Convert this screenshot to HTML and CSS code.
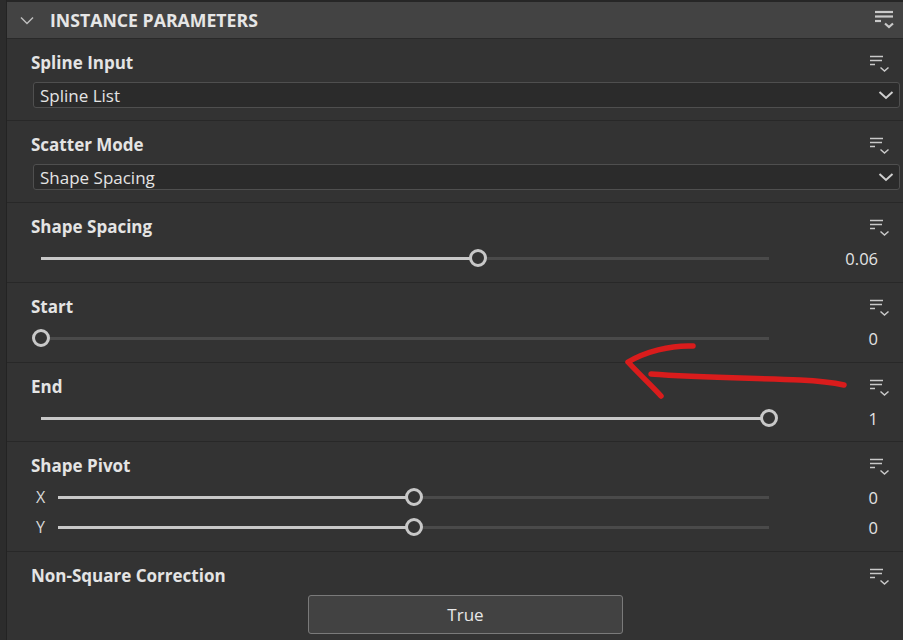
FILE: index.html
```html
<!DOCTYPE html>
<html lang="en">
  <head>
    <meta charset="UTF-8" />
    <meta name="viewport" content="width=device-width, initial-scale=1.0" />
    <link rel="stylesheet" href="styles.css">
    <title>Instance Parameters</title>
  </head>
  <body>
    <div class="strip"></div>
    <div class="panel">
      <header class="panel-head">
        <svg class="collapse" width="14" height="9" viewBox="0 0 14 9"><polyline points="1,1.5 7,7.5 13,1.5" /></svg>
        <h1>INSTANCE PARAMETERS</h1>
        <svg class="menu menu-big" width="22" height="20" viewBox="0 0 22 20">
          <line x1="1" y1="2" x2="19" y2="2" />
          <line x1="1" y1="6.5" x2="19" y2="6.5" />
          <line x1="1" y1="11" x2="7" y2="11" />
          <polyline points="11,13.5 15,17 19,13.5" />
        </svg>
      </header>

      <section class="param">
        <div class="param-title"><span>Spline Input</span><svg class="menu" width="20" height="18" viewBox="0 0 20 18"><line x1="0" y1="1.5" x2="13" y2="1.5" /><line x1="0" y1="5.5" x2="12" y2="5.5" /><line x1="0" y1="9.5" x2="5" y2="9.5" /><polyline points="10.5,12.5 14.5,16 18.5,12.5" /></svg></div>
        <div class="select"><span>Spline List</span><svg width="16" height="10" viewBox="0 0 16 10"><polyline points="1.5,2 8,8 14.5,2" /></svg></div>
      </section>

      <section class="param">
        <div class="param-title"><span>Scatter Mode</span><svg class="menu" width="20" height="18" viewBox="0 0 20 18"><line x1="0" y1="1.5" x2="13" y2="1.5" /><line x1="0" y1="5.5" x2="12" y2="5.5" /><line x1="0" y1="9.5" x2="5" y2="9.5" /><polyline points="10.5,12.5 14.5,16 18.5,12.5" /></svg></div>
        <div class="select"><span>Shape Spacing</span><svg width="16" height="10" viewBox="0 0 16 10"><polyline points="1.5,2 8,8 14.5,2" /></svg></div>
      </section>

      <section class="param">
        <div class="param-title"><span>Shape Spacing</span><svg class="menu" width="20" height="18" viewBox="0 0 20 18"><line x1="0" y1="1.5" x2="13" y2="1.5" /><line x1="0" y1="5.5" x2="12" y2="5.5" /><line x1="0" y1="9.5" x2="5" y2="9.5" /><polyline points="10.5,12.5 14.5,16 18.5,12.5" /></svg></div>
        <div class="slider-row">
          <div class="track"><div class="fill" style="width: 60%"></div><div class="thumb" style="left: 60%"></div></div>
          <span class="value">0.06</span>
        </div>
      </section>

      <section class="param">
        <div class="param-title"><span>Start</span><svg class="menu" width="20" height="18" viewBox="0 0 20 18"><line x1="0" y1="1.5" x2="13" y2="1.5" /><line x1="0" y1="5.5" x2="12" y2="5.5" /><line x1="0" y1="9.5" x2="5" y2="9.5" /><polyline points="10.5,12.5 14.5,16 18.5,12.5" /></svg></div>
        <div class="slider-row">
          <div class="track"><div class="fill" style="width: 0%"></div><div class="thumb" style="left: 0%"></div></div>
          <span class="value">0</span>
        </div>
      </section>

      <section class="param param-tight">
        <div class="param-title"><span>End</span><svg class="menu" width="20" height="18" viewBox="0 0 20 18"><line x1="0" y1="1.5" x2="13" y2="1.5" /><line x1="0" y1="5.5" x2="12" y2="5.5" /><line x1="0" y1="9.5" x2="5" y2="9.5" /><polyline points="10.5,12.5 14.5,16 18.5,12.5" /></svg></div>
        <div class="slider-row">
          <div class="track"><div class="fill" style="width: 100%"></div><div class="thumb" style="left: 100%"></div></div>
          <span class="value">1</span>
        </div>
      </section>

      <section class="param">
        <div class="param-title"><span>Shape Pivot</span><svg class="menu" width="20" height="18" viewBox="0 0 20 18"><line x1="0" y1="1.5" x2="13" y2="1.5" /><line x1="0" y1="5.5" x2="12" y2="5.5" /><line x1="0" y1="9.5" x2="5" y2="9.5" /><polyline points="10.5,12.5 14.5,16 18.5,12.5" /></svg></div>
        <div class="slider-row axis">
          <span class="axis-label">X</span>
          <div class="track"><div class="fill" style="width: 50%"></div><div class="thumb" style="left: 50%"></div></div>
          <span class="value">0</span>
        </div>
        <div class="slider-row axis">
          <span class="axis-label">Y</span>
          <div class="track"><div class="fill" style="width: 50%"></div><div class="thumb" style="left: 50%"></div></div>
          <span class="value">0</span>
        </div>
      </section>

      <section class="param last">
        <div class="param-title"><span>Non-Square Correction</span><svg class="menu" width="20" height="18" viewBox="0 0 20 18"><line x1="0" y1="1.5" x2="13" y2="1.5" /><line x1="0" y1="5.5" x2="12" y2="5.5" /><line x1="0" y1="9.5" x2="5" y2="9.5" /><polyline points="10.5,12.5 14.5,16 18.5,12.5" /></svg></div>
        <button class="toggle">True</button>
      </section>
    </div>

    <!-- red hand-drawn annotation -->
    <svg class="annotation" width="903" height="640" viewBox="0 0 903 640">
      <path d="M693 346 C 670 345, 645 352, 628 362 C 640 375, 652 386, 661 396" />
      <path d="M651 374 C 700 378, 760 378, 800 380 C 820 381, 835 383, 844 385" />
    </svg>
  </body>
</html>
```

FILE: styles.css
```css
* {
  margin: 0;
  padding: 0;
  box-sizing: border-box;
}

body {
  display: flex;
  height: 640px;
  overflow: hidden;
  background-color: #2c2c2c;
  color: #e4e4e4;
  font-family: "Open Sans", "Noto Sans", sans-serif;
}

.strip {
  width: 7px;
  border-right: 1px solid #232323;
}

.panel {
  flex: 1;
  background-color: #333;
}

/* HEADER */
.panel-head {
  display: flex;
  align-items: center;
  height: 39px;
  padding: 0 7px 0 13px;
  background-color: #434343;
  border-top: 2px solid #262626;
  border-bottom: 1px solid #292929;
}

.panel-head h1 {
  flex: 1;
  margin-left: 16px;
  font-size: 17.7px;
  font-weight: 700;
  color: #e6e6e6;
}

.collapse polyline {
  fill: none;
  stroke: #bdbdbd;
  stroke-width: 1.5;
}

.menu line,
.menu polyline {
  fill: none;
  stroke: #c9c9c9;
  stroke-width: 1.5;
}

.menu-big line,
.menu-big polyline {
  stroke-width: 2.2;
}

/* PARAMETERS */
.param {
  display: flex;
  flex-direction: column;
  padding: 12px 3px 12px 24px;
  border-bottom: 1px solid #282828;
}

.param-tight {
  padding-bottom: 11px;
}

.param-title {
  display: flex;
  align-items: center;
  justify-content: space-between;
  height: 22px;
  font-size: 17px;
  font-weight: 700;
  margin-bottom: 9px;
}

.param-title .menu {
  margin-right: 10px;
  margin-top: 4px;
}

.select {
  display: flex;
  align-items: center;
  justify-content: space-between;
  height: 26px;
  margin-left: 2px;
  padding: 0 5px 0 6px;
  background-color: #2b2b2b;
  border: 1px solid #4f4f4f;
  border-radius: 3px;
  font-size: 17px;
}

.select polyline {
  fill: none;
  stroke: #cfcfcf;
  stroke-width: 2;
}

.slider-row {
  display: flex;
  align-items: center;
  height: 24px;
  padding-left: 10px;
}

.slider-row.axis {
  padding-left: 5px;
}

.slider-row.axis + .slider-row.axis {
  margin-top: 6px;
}

.axis-label {
  width: 22px;
  font-size: 16px;
  color: #d8d8d8;
}

.track {
  position: relative;
  width: 728px;
  height: 3px;
  background-color: #4a4a4a;
}

.slider-row.axis .track {
  width: 711px;
}

.fill {
  height: 3px;
  background-color: #c8c8c8;
}

.thumb {
  position: absolute;
  top: 50%;
  width: 18px;
  height: 18px;
  border: 3px solid #c8c8c8;
  border-radius: 50%;
  background-color: #333;
  transform: translate(-50%, -50%);
}

.value {
  flex: 1;
  text-align: right;
  margin-right: 22px;
  font-size: 16.5px;
  color: #e4e4e4;
}

.last {
  border-bottom: none;
}

.toggle {
  align-self: center;
  width: 315px;
  height: 39px;
  background-color: #424242;
  border: 1px solid #7a7a7a;
  border-radius: 3px;
  color: #e8e8e8;
  font-family: inherit;
  font-size: 17px;
}

/* ANNOTATION */
.annotation {
  position: absolute;
  top: 0;
  left: 0;
  pointer-events: none;
}

.annotation path {
  fill: none;
  stroke: #d91c1c;
  stroke-width: 5.5;
  stroke-linecap: round;
  stroke-linejoin: round;
}
```
